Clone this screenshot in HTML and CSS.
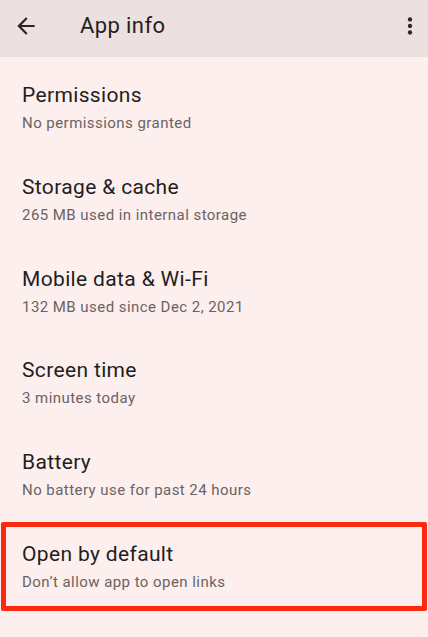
FILE: index.html
```html
<!DOCTYPE html>
<html>
<head>
<meta charset="utf-8">
<link rel="stylesheet" href="styles.css">
</head>
<body>
<div class="app">
  <header class="topbar">
    <svg class="icon back" viewBox="0 0 24 24" width="26" height="26"><path d="M20 11H7.83l5.59-5.59L12 4l-8 8 8 8 1.41-1.41L7.83 13H20v-2z"/></svg>
    <h1 class="title">App info</h1>
    <svg class="icon more" viewBox="0 0 24 24" width="26" height="26"><circle cx="12" cy="6" r="2"/><circle cx="12" cy="12" r="2"/><circle cx="12" cy="18" r="2"/></svg>
  </header>
  <ul class="list">
    <li class="item"><div class="item-title">Permissions</div><div class="item-sub">No permissions granted</div></li>
    <li class="item"><div class="item-title">Storage &amp; cache</div><div class="item-sub">265 MB used in internal storage</div></li>
    <li class="item"><div class="item-title">Mobile data &amp; Wi-Fi</div><div class="item-sub">132 MB used since Dec 2, 2021</div></li>
    <li class="item"><div class="item-title">Screen time</div><div class="item-sub">3 minutes today</div></li>
    <li class="item"><div class="item-title">Battery</div><div class="item-sub">No battery use for past 24 hours</div></li>
    <li class="item highlight"><div class="item-title">Open by default</div><div class="item-sub">Don’t allow app to open links</div></li>
  </ul>
</div>
</body>
</html>
```

FILE: styles.css
```css
html, body {
  margin: 0;
  padding: 0;
  background: #fcefee;
}
body {
  font-family: Roboto, "Noto Sans", "Liberation Sans", sans-serif;
  width: 428px;
  height: 637px;
  overflow: hidden;
}
.app {
  display: flex;
  flex-direction: column;
}
.topbar {
  height: 57px;
  box-sizing: border-box;
  padding: 0 5px 5px 13px;
  background: #ece0e0;
  display: flex;
  align-items: center;
}
.icon {
  fill: #2b2525;
  flex: none;
}
.title {
  margin: 0 0 0 41px;
  font-size: 22px;
  font-weight: 400;
  line-height: 28px;
  letter-spacing: 0.4px;
  color: #231e1e;
  flex: 1;
}
.list {
  list-style: none;
  margin: 0;
  padding: 5px 0 0 0;
}
.item {
  position: relative;
  padding: 19.33px 22px;
  height: 53px;
}
.item-title {
  font-size: 21px;
  line-height: 28px;
  letter-spacing: 0.35px;
  color: #231e1e;
}
.item-sub {
  margin-top: 3px;
  font-size: 15px;
  line-height: 22px;
  letter-spacing: 0.45px;
  color: #6c6262;
}
.highlight::after {
  content: "";
  position: absolute;
  left: 1px;
  right: 1px;
  top: 1.7px;
  bottom: 1px;
  border: 5px solid #fa2a0e;
  border-radius: 2px;
}
```
